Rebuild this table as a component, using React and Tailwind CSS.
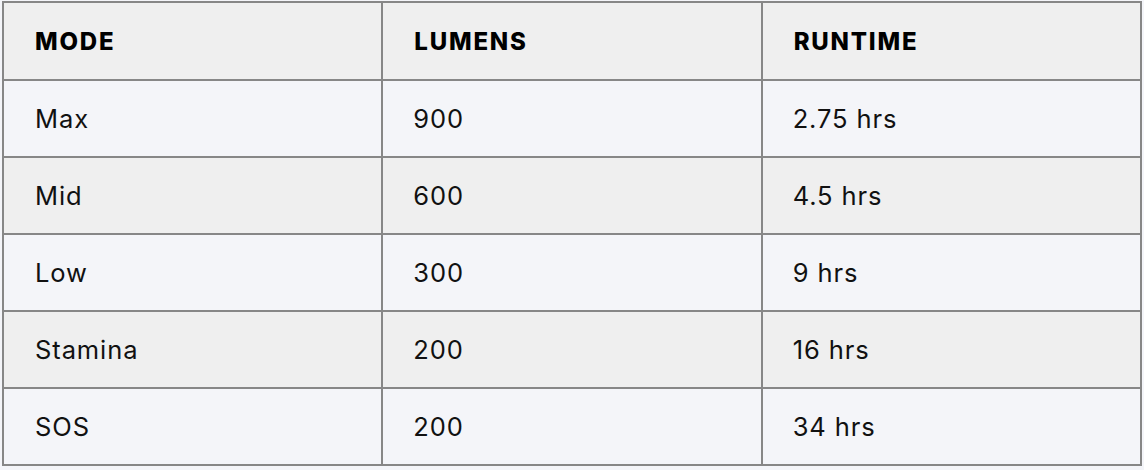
const rows = [
  { mode: 'Max', lumens: '900', runtime: '2.75 hrs' },
  { mode: 'Mid', lumens: '600', runtime: '4.5 hrs' },
  { mode: 'Low', lumens: '300', runtime: '9 hrs' },
  { mode: 'Stamina', lumens: '200', runtime: '16 hrs' },
  { mode: 'SOS', lumens: '200', runtime: '34 hrs' },
]

function App() {
  return (
    <div className="w-[1144px] h-[470px] bg-[#f4f5f9] pt-[1px] pl-[2px] font-['Inter',sans-serif] text-[#111]">
      <table className="w-[1140px] border-collapse table-fixed">
        <thead>
          <tr className="bg-[#efefef]">
            {['MODE', 'LUMENS', 'RUNTIME'].map(h => (
              <th key={h} className="h-[78px] border-2 border-[#878787] pl-[31px] pt-[2px] text-left text-[24px] font-extrabold tracking-[1.8px] text-black">
                {h}
              </th>
            ))}
          </tr>
        </thead>
        <tbody>
          {rows.map((r, i) => (
            <tr key={r.mode} className={i % 2 ? 'bg-[#efefef]' : 'bg-[#f4f5f9]'}>
              <td className="h-[77px] border-2 border-[#878787] pl-[31px] pt-[2px] text-[25.5px] tracking-[0.9px]">{r.mode}</td>
              <td className="h-[77px] border-2 border-[#878787] pl-[30px] pt-[2px] text-[25.5px] tracking-[0.9px]">{r.lumens}</td>
              <td className="h-[77px] border-2 border-[#878787] pl-[30px] pt-[2px] text-[25.5px] tracking-[0.9px]">{r.runtime}</td>
            </tr>
          ))}
        </tbody>
      </table>
    </div>
  )
}

export default App
